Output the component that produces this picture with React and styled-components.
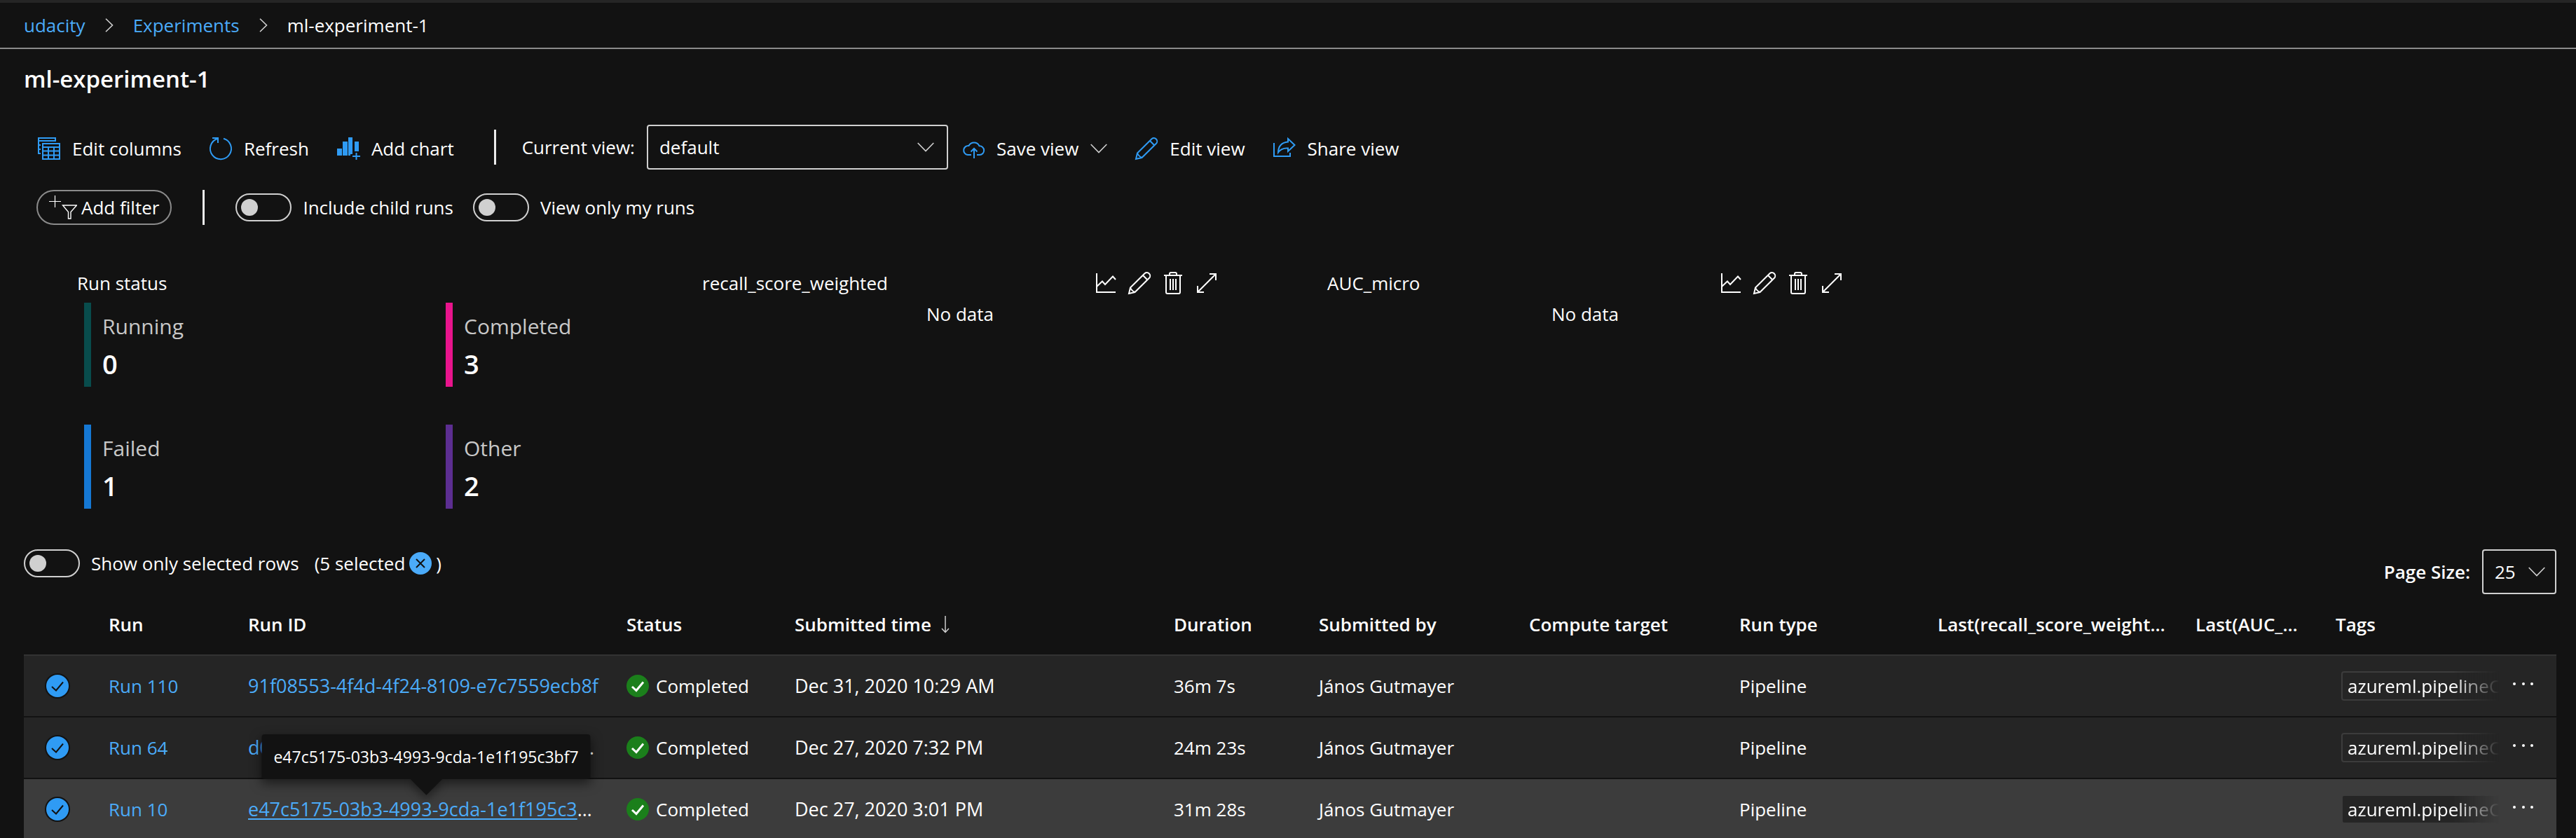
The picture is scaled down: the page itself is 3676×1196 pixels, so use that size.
import React, { useId, useState } from "react";
import styled, { createGlobalStyle } from "styled-components";

const color = {
  page: "#121212",
  row: "#252525",
  rowHover: "#3c3c3c",
  line: "#333333",
  text: "#ffffff",
  muted: "#c8c8c8",
  control: "#d0d0d0",
  link: "#4babf9",
  icon: "#2f9bf4",
  success: "#1b7f1b",
};

const GlobalStyle = createGlobalStyle`
  *, *::before, *::after { box-sizing: border-box; }
  body {
    margin: 0;
    background: ${color.page};
    color: ${color.text};
    font: 400 26px/36px "Open Sans", "Noto Sans", sans-serif;
  }
  button, input, select { font: inherit; color: inherit; margin: 0; }
  a { color: ${color.link}; text-decoration: none; }
`;

/* ---------- Icons ---------- */

const Svg = styled.svg`
  display: block;
  flex: none;
  fill: none;
  stroke: ${(p) => p.$color || color.text};
  stroke-width: 2;
`;

const shapes = {
  columns: (
    <>
      <path d="M4 23H1V1H25V5H1M1 11H4M1 17H4" />
      <path d="M7 9H31V31H7ZM7 14H31M7 19.500H31M7 25.500H31M15 14V31M23 14V31" />
    </>
  ),
  refresh: <path d="M20 1.700A15 15 0 1 1 11 2M4 1H12V8" />,
  chart: (
    <>
      <path stroke="none" fill={color.icon} d="M0 16h7v10H0zM8 6h7v20H8zM16 0h6v24h-3v2h-3zM25 6h6v14h-6z" />
      <path d="M27.500 22V32M22 27H33" />
    </>
  ),
  cloud: (
    <path d="M13 25H8A6.500 6.500 0 1 1 9.500 12A8.500 8.500 0 0 1 24.500 12.200A6.400 6.400 0 1 1 25 25H21M17 30V16M12.500 20.500L17 16L21.500 20.500" />
  ),
  pencil: (
    <path d="M3 22.500L23.500 2.300A4.600 4.600 0 0 1 30 8.800L9.500 29L1 31ZM21 5L27.500 11.500M3 22.500C4 25 7 28 9.500 29" />
  ),
  share: (
    <path d="M1 8V27H24V22M21 2L30.500 11L21 20V15.500C14 15 10 17 7 21.500C7 13 12 7 21 6.500Z" />
  ),
  lines: <path d="M3 2V29H30M3 21L11 13.500L15 18L26 6.500L30 11" />,
  trash: (
    <path d="M3 5H29M11 5V3Q11 1 13 1H19Q21 1 21 3V5M6 5V29Q6 31 8 31H24Q26 31 26 29V5M12 10V26M16 10V26M20 10V26" />
  ),
  expand: <path d="M3 29L29 3M20 3H29V12M3 20V29H12" />,
  dots: (
    <g stroke="none" fill={color.text}>
      <circle cx="3" cy="13" r="2" />
      <circle cx="16" cy="13" r="2" />
      <circle cx="28" cy="13" r="2" />
    </g>
  ),
};

const Icon = ({ name, tint }) => (
  <Svg width="32" height="32" viewBox="0 0 32 32" overflow="visible" $color={tint} aria-hidden="true">
    {shapes[name]}
  </Svg>
);

const ChevronRight = () => (
  <Svg width="12" height="20" viewBox="0 0 12 20" $color={color.control} aria-hidden="true">
    <path d="M1 0.700L10.500 10L1 19.300" strokeWidth="1.600" />
  </Svg>
);

const ChevronDown = () => (
  <Svg width="24" height="14" viewBox="0 0 24 14" $color={color.control} aria-hidden="true">
    <path d="M0.700 1L12 12.500L23.300 1" strokeWidth="1.600" />
  </Svg>
);

const FilterIcon = () => (
  <Svg width="40" height="34" viewBox="0 0 40 34" aria-hidden="true">
    <path strokeWidth="1.200" d="M8.500 0V17M0 8.500H17" />
    <path d="M19.500 14H39.500L31 23.500V33H27.500V23.500Z" strokeWidth="1.400" />
  </Svg>
);

const SortArrow = () => (
  <Svg width="12" height="26" viewBox="0 0 12 26" $color={color.control} aria-hidden="true">
    <path d="M6 1V24M1 19L6 24.500L11 19" strokeWidth="1.500" />
  </Svg>
);

const CheckMark = ({ tint, weight }) => (
  <Svg width="32" height="32" viewBox="0 0 32 32" $color={tint} aria-hidden="true">
    <path strokeWidth={weight} d="M8 17L14 22.500L24 10.500" />
  </Svg>
);

/* ---------- Shell ---------- */

const Shell = styled.div`
  height: 100vh;
  overflow: hidden;
  border-top: 4px solid ${color.row};
`;

const Header = styled.header`
  padding: 14px 34px;
  border-bottom: 2px solid #8b8b8b;
`;

const Crumbs = styled.ol`
  display: flex;
  align-items: center;
  gap: 28px;
  margin: 0;
  padding: 0;
  list-style: none;
`;

const Crumb = styled.li`
  display: flex;
  align-items: center;
  gap: 28px;
`;

const Main = styled.main`
  padding-top: 21px;
`;

const Title = styled.h1`
  margin: 0 34px 43px;
  font-size: 33px;
  line-height: 44px;
  font-weight: 600;
`;

/* ---------- Toolbars ---------- */

const Toolbar = styled.div`
  display: flex;
  align-items: center;
  height: 64px;
  padding: 0 34px;
`;

const ToolButton = styled.button`
  display: flex;
  align-items: center;
  gap: 17px;
  padding: 4px 20px 0;
  border: 0;
  background: none;
  white-space: nowrap;
  cursor: pointer;
`;

const Divider = styled.span`
  flex: none;
  width: 3px;
  height: 50px;
  margin: 0 ${(p) => p.$gap}px;
  background: #ececec;
`;

const FieldLabel = styled.label`
  margin-right: 17px;
  font-weight: ${(p) => (p.$strong ? 600 : 400)};
  white-space: nowrap;
`;

const SelectBox = styled.span`
  display: grid;
  grid-template-columns: 1fr auto;
  align-items: center;
  width: ${(p) => p.$width}px;

  > select { grid-area: 1 / 1 / 2 / 3; }
  > svg { grid-area: 1 / 2; margin-right: ${(p) => p.$inset}px; pointer-events: none; }
`;

const SelectInput = styled.select`
  width: 100%;
  height: 64px;
  padding: 0 16px;
  appearance: none;
  background: ${color.page};
  border: 2px solid ${color.control};
  border-radius: 4px;
`;

const FilterBar = styled.div`
  display: flex;
  align-items: center;
  height: 52px;
  margin: 28px 34px 66px 52px;
`;

const PillButton = styled.button`
  display: flex;
  align-items: center;
  gap: 6px;
  height: 50px;
  padding: 0 16px;
  border: 2px solid #8b8b8b;
  border-radius: 25px;
  background: none;
  white-space: nowrap;
  cursor: pointer;
`;

const ToggleLabel = styled.label`
  display: flex;
  align-items: center;
  gap: 16px;
  margin-right: 28px;
  white-space: nowrap;
`;

const ToggleInput = styled.input`
  appearance: none;
  display: flex;
  align-items: center;
  width: 80px;
  height: 40px;
  padding: 0 6px;
  border: 2px solid ${color.control};
  border-radius: 20px;

  &::before {
    content: "";
    width: 24px;
    height: 24px;
    border-radius: 50%;
    background: ${color.control};
  }
  &:checked { justify-content: flex-end; }
`;

/* ---------- Cards ---------- */

const Cards = styled.section`
  display: grid;
  grid-template-columns: repeat(4, 1fr);
  padding: 0 54px;
  margin-bottom: 58px;
`;

const Card = styled.article`
  display: flex;
  flex-direction: column;
  gap: 12px;
  padding: 0 100px 0 56px;
`;

const CardHead = styled.div`
  display: flex;
  align-items: center;
  justify-content: space-between;
  height: 32px;
`;

const CardTitle = styled.h2`
  margin: 0;
  font-size: 26px;
  font-weight: 400;
`;

const CardActions = styled.div`
  display: flex;
  gap: 16px;
`;

const IconButton = styled.button`
  display: block;
  padding: 0;
  border: 0;
  background: none;
  cursor: pointer;
`;

const NoData = styled.p`
  margin: 0;
  line-height: 32px;
  text-align: center;
`;

const Stats = styled.dl`
  display: grid;
  grid-template-columns: 516px 1fr;
  row-gap: 54px;
  margin: 0 0 0 10px;
`;

const Stat = styled.div`
  display: flex;
  flex-direction: column;
  gap: 6px;
  padding: 12px 0 8px 16px;
  border-left: 10px solid ${(p) => p.$accent};
`;

const StatName = styled.dt`
  font-size: 30px;
  line-height: 44px;
  color: ${color.muted};
`;

const StatValue = styled.dd`
  margin: 0;
  font-size: 38px;
  line-height: 50px;
  font-weight: 600;
`;

/* ---------- Selection bar ---------- */

const SelectionBar = styled.div`
  display: flex;
  justify-content: space-between;
  align-items: flex-start;
  height: 64px;
  padding: 0 28px 0 34px;
`;

const SelectionSide = styled.div`
  display: flex;
  align-items: center;
`;

const Selected = styled.span`
  display: flex;
  align-items: center;
  gap: 6px;
  margin-left: -6px;
`;

const ClearButton = styled.button`
  display: grid;
  place-items: center;
  width: 32px;
  height: 32px;
  padding: 0;
  border: 0;
  border-radius: 50%;
  background: ${color.link};
  cursor: pointer;
`;

/* ---------- Table ---------- */

const TableWrap = styled.div`
  padding: 0 28px 0 34px;
`;

const Table = styled.table`
  width: 100%;
  table-layout: fixed;
  border-spacing: 0;
`;

const Col = styled.col`
  width: ${(p) => p.$width}px;
`;

const HeadCell = styled.th`
  height: 88px;
  padding: 0 16px;
  border-bottom: 2px solid ${color.line};
  font-weight: 600;
  text-align: left;
  white-space: nowrap;
  overflow: hidden;
  text-overflow: ellipsis;
`;

const SortLabel = styled.span`
  display: flex;
  align-items: center;
  gap: 14px;
`;

const BodyRow = styled.tr`
  background: ${(p) => (p.$active ? color.rowHover : color.row)};
`;

const Cell = styled.td`
  height: 88px;
  padding: 0 16px;
  border-bottom: 2px solid ${color.page};
  font-size: ${(p) => (p.$numeric ? 27 : 26)}px;
  white-space: nowrap;
`;

const CheckCell = styled(Cell)`
  padding: 0 32px;
`;

const TagCell = styled(Cell)`
  padding-right: 3px;
`;

const RowCheck = styled.span`
  display: grid;
  width: 32px;
  height: 32px;

  > * { grid-area: 1 / 1; }
  > svg { pointer-events: none; }
`;

const RowCheckInput = styled.input`
  appearance: none;
  width: 32px;
  height: 32px;
  border-radius: 50%;
  background: ${color.icon};
  box-shadow: 0 0 0 2px ${color.page};
`;

const Hinted = styled.div`
  position: relative;
`;

const Truncate = styled.div`
  margin-right: 6px;
  overflow: hidden;
  text-overflow: ellipsis;
`;

const RunLink = styled.a`
  text-decoration: ${(p) => (p.$hovered ? "underline" : "none")};
  text-decoration-thickness: 2px;
  text-underline-offset: 3px;
`;

const Tooltip = styled.div`
  position: absolute;
  z-index: 2;
  left: 50%;
  bottom: calc(100% + 25px);
  transform: translateX(-50%);
  padding: 16px 17px;
  border-radius: 4px;
  background: ${color.page};
  box-shadow: 0 6px 16px rgba(0, 0, 0, 0.55);
  font-size: 23px;
  line-height: 32px;

  &::after {
    content: "";
    position: absolute;
    left: calc(50% - 16px);
    bottom: -16px;
    width: 32px;
    height: 32px;
    background: ${color.page};
    box-shadow: 6px 6px 12px rgba(0, 0, 0, 0.35);
    transform: rotate(45deg);
    clip-path: polygon(200% -100%, 200% 200%, -100% 200%);
  }
`;

const Status = styled.span`
  display: flex;
  align-items: center;
  gap: 10px;
`;

const StatusBadge = styled.span`
  border-radius: 50%;
  background: ${color.success};
`;

const Tags = styled.div`
  display: flex;
  padding-left: 8px;
  overflow: hidden;
  mask-image: linear-gradient(to left, transparent, #000 66px);
`;

const Tag = styled.span`
  flex: none;
  padding: 1px 7px;
  border: 2px solid ${color.rowHover};
  border-radius: 4px;
  background: ${color.row};
`;

/* ---------- Data ---------- */

const stats = [
  { name: "Running", value: 0, accent: "#084c4c" },
  { name: "Completed", value: 3, accent: "#e8148c" },
  { name: "Failed", value: 1, accent: "#1578d4" },
  { name: "Other", value: 2, accent: "#5c2e91" },
];

const columns = [
  { title: "", width: 105 },
  { title: "Run", width: 199 },
  { title: "Run ID", width: 540 },
  { title: "Status", width: 240 },
  { title: "Submitted time", width: 541, sorted: true },
  { title: "Duration", width: 207 },
  { title: "Submitted by", width: 300 },
  { title: "Compute target", width: 300 },
  { title: "Run type", width: 283 },
  { title: "Last(recall_score_weighted)", width: 368 },
  { title: "Last(AUC_micro)", width: 200 },
  { title: "Tags", width: 252 },
  { title: "", width: 79 },
];

const runs = [
  { name: "Run 110", id: "91f08553-4f4d-4f24-8109-e7c7559ecb8f", time: "Dec 31, 2020 10:29 AM", duration: "36m 7s" },
  { name: "Run 64", id: "d0a7b3d4-52e8-4b09-a4d6-80b2d96ad0e4", time: "Dec 27, 2020 7:32 PM", duration: "24m 23s" },
  { name: "Run 10", id: "e47c5175-03b3-4993-9cda-1e1f195c3bf7", time: "Dec 27, 2020 3:01 PM", duration: "31m 28s", hovered: true },
];

/* ---------- Parts ---------- */

function Toggle({ children }) {
  const [on, setOn] = useState(false);
  return (
    <ToggleLabel>
      <ToggleInput type="checkbox" role="switch" checked={on} onChange={() => setOn(!on)} />
      {children}
    </ToggleLabel>
  );
}

function Select({ label, strong, width, inset, options }) {
  const id = useId();
  return (
    <>
      <FieldLabel htmlFor={id} $strong={strong}>{label}</FieldLabel>
      <SelectBox $width={width} $inset={inset}>
        <SelectInput id={id}>
          {options.map((option) => <option key={option}>{option}</option>)}
        </SelectInput>
        <ChevronDown />
      </SelectBox>
    </>
  );
}

function Action({ icon, children, menu }) {
  return (
    <ToolButton type="button">
      <Icon name={icon} tint={color.icon} />
      {children}
      {menu && <ChevronDown />}
    </ToolButton>
  );
}

function ChartCard({ title }) {
  return (
    <Card>
      <CardHead>
        <CardTitle>{title}</CardTitle>
        <CardActions>
          <IconButton type="button" aria-label="Chart type"><Icon name="lines" /></IconButton>
          <IconButton type="button" aria-label="Edit chart"><Icon name="pencil" /></IconButton>
          <IconButton type="button" aria-label="Delete chart"><Icon name="trash" /></IconButton>
          <IconButton type="button" aria-label="Expand chart"><Icon name="expand" /></IconButton>
        </CardActions>
      </CardHead>
      <NoData>No data</NoData>
    </Card>
  );
}

function RunRow({ run }) {
  return (
    <BodyRow $active={run.hovered}>
      <CheckCell>
        <RowCheck>
          <RowCheckInput type="checkbox" defaultChecked aria-label={`Select ${run.name}`} />
          <CheckMark tint={color.page} weight="2" />
        </RowCheck>
      </CheckCell>
      <Cell><a href="#run">{run.name}</a></Cell>
      <Cell $numeric>
        <Hinted>
          <Truncate><RunLink href="#run" $hovered={run.hovered}>{run.id}</RunLink></Truncate>
          {run.hovered && <Tooltip role="tooltip">{run.id}</Tooltip>}
        </Hinted>
      </Cell>
      <Cell>
        <Status>
          <StatusBadge><CheckMark weight="3" /></StatusBadge>
          Completed
        </Status>
      </Cell>
      <Cell $numeric>{run.time}</Cell>
      <Cell>{run.duration}</Cell>
      <Cell>János Gutmayer</Cell>
      <Cell />
      <Cell>Pipeline</Cell>
      <Cell />
      <Cell />
      <TagCell>
        <Tags><Tag>azureml.pipelineComponent</Tag></Tags>
      </TagCell>
      <Cell>
        <IconButton type="button" aria-label={`More actions for ${run.name}`}><Icon name="dots" /></IconButton>
      </Cell>
    </BodyRow>
  );
}

export default function App() {
  return (
    <Shell>
      <GlobalStyle />
      <Header>
        <nav aria-label="Breadcrumb">
          <Crumbs>
            <Crumb><a href="#workspace">udacity</a><ChevronRight /></Crumb>
            <Crumb><a href="#experiments">Experiments</a><ChevronRight /></Crumb>
            <Crumb>ml-experiment-1</Crumb>
          </Crumbs>
        </nav>
      </Header>
      <Main>
        <Title>ml-experiment-1</Title>
        <Toolbar>
          <Action icon="columns">Edit columns</Action>
          <Action icon="refresh">Refresh</Action>
          <Action icon="chart">Add chart</Action>
          <Divider $gap={37} />
          <Select label="Current view:" width={430} inset={20} options={["default"]} />
          <Action icon="cloud" menu>Save view</Action>
          <Action icon="pencil">Edit view</Action>
          <Action icon="share">Share view</Action>
        </Toolbar>
        <FilterBar>
          <PillButton type="button"><FilterIcon />Add filter</PillButton>
          <Divider $gap={44} />
          <Toggle>Include child runs</Toggle>
          <Toggle>View only my runs</Toggle>
        </FilterBar>
        <Cards>
          <Card>
            <CardHead><CardTitle>Run status</CardTitle></CardHead>
            <Stats>
              {stats.map((stat) => (
                <Stat key={stat.name} $accent={stat.accent}>
                  <StatName>{stat.name}</StatName>
                  <StatValue>{stat.value}</StatValue>
                </Stat>
              ))}
            </Stats>
          </Card>
          <ChartCard title="recall_score_weighted" />
          <ChartCard title="AUC_micro" />
        </Cards>
        <SelectionBar>
          <SelectionSide>
            <Toggle>Show only selected rows</Toggle>
            <Selected>
              (5 selected
              <ClearButton type="button" aria-label="Clear selection">
                <Svg width="14" height="14" viewBox="0 0 14 14" $color={color.page}>
                  <path d="M1 1L13 13M13 1L1 13" />
                </Svg>
              </ClearButton>
              )
            </Selected>
          </SelectionSide>
          <SelectionSide>
            <Select label="Page Size:" strong width={106} inset={16} options={["25", "50", "100"]} />
          </SelectionSide>
        </SelectionBar>
        <TableWrap>
          <Table>
            <colgroup>
              {columns.map((column, i) => <Col key={i} $width={column.width} />)}
            </colgroup>
            <thead>
              <tr>
                {columns.map((column, i) => (
                  <HeadCell key={i} scope="col" aria-sort={column.sorted ? "descending" : undefined}>
                    {column.sorted ? <SortLabel>{column.title}<SortArrow /></SortLabel> : column.title}
                  </HeadCell>
                ))}
              </tr>
            </thead>
            <tbody>
              {runs.map((run) => <RunRow key={run.id} run={run} />)}
            </tbody>
          </Table>
        </TableWrap>
      </Main>
    </Shell>
  );
}
